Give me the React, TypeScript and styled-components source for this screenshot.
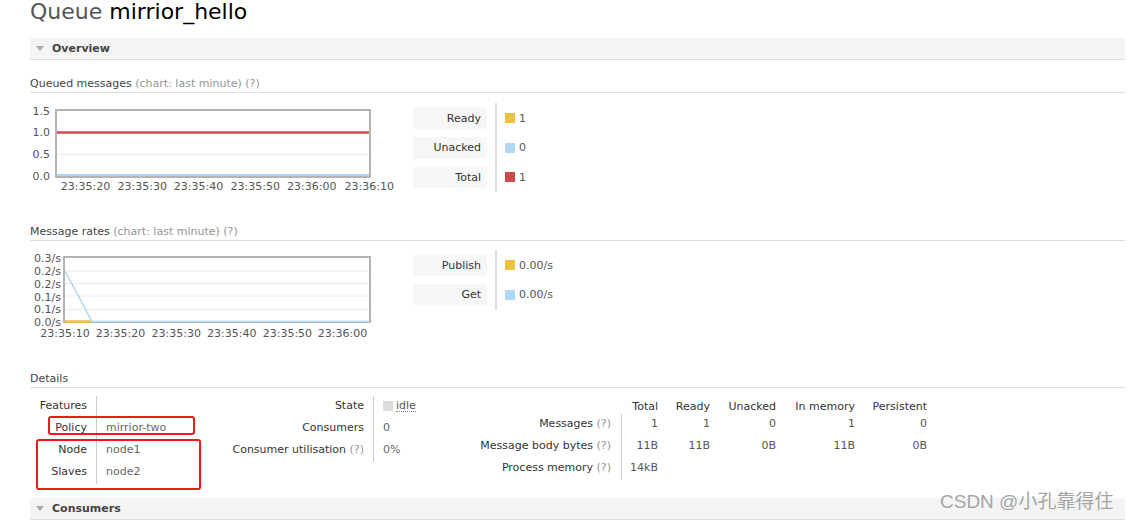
import React from 'react';
import styled, { createGlobalStyle } from 'styled-components';

const GlobalStyle = createGlobalStyle`
  html, body { margin: 0; padding: 0; background: #fff; }
  body {
    font-family: "DejaVu Sans", Verdana, sans-serif;
    font-size: 11px;
    color: #484848;
  }
`;

const Page = styled.div`
  position: relative;
  padding-left: 30px;
  width: 1095px;
  height: 522px;
  overflow: hidden;
`;

const Title = styled.h1`
  margin: 0 0 14px;
  font-size: 22px;
  line-height: 24px;
  font-weight: normal;
  color: #555;
  b { color: #000; font-weight: normal; }
`;

const SectionBar = styled.div<{ $mt?: number }>`
  height: 21px;
  margin-top: ${p => p.$mt ?? 0}px;
  border-bottom: 1px solid #ddd;
  background: #f4f4f4;
  display: flex;
  align-items: center;
  gap: 8px;
  padding-left: 6px;
  font-weight: bold;
  color: #444;
`;

const Caret = styled.span`
  width: 0;
  height: 0;
  border-left: 4.5px solid transparent;
  border-right: 4.5px solid transparent;
  border-top: 5px solid #aaa;
`;

const SubHeading = styled.h3<{ $mt: number }>`
  margin: ${p => p.$mt}px 0 0;
  font-size: 11px;
  line-height: 16px;
  font-weight: normal;
  color: #444;
  border-bottom: 1px solid #ddd;
`;

const Muted = styled.span`
  color: #949494;
`;

const ChartRow = styled.div<{ $mt: number }>`
  display: flex;
  align-items: flex-start;
  margin-top: ${p => p.$mt}px;
`;

const Plot = styled.svg`
  display: block;
  flex: none;
  font-family: "DejaVu Sans", Verdana, sans-serif;
  font-size: 11px;
  text { fill: #545454; }
`;

const Legend = styled.div`
  display: flex;
  margin: 3px 0 0 13px;
  gap: 8px;
`;

const LegendCol = styled.div`
  display: flex;
  flex-direction: column;
  gap: 7.5px;
  padding: 4px 0;
`;

const LegendLabel = styled.div`
  width: 74px;
  height: 22px;
  box-sizing: border-box;
  padding-right: 6px;
  background: #f7f7f7;
  border-radius: 3px;
  display: flex;
  align-items: center;
  justify-content: flex-end;
  color: #333;
`;

const LegendDivider = styled.div`
  width: 2px;
  background: #ddd;
`;

const LegendValue = styled.div`
  height: 22px;
  display: flex;
  align-items: center;
  gap: 4px;
  color: #555;
`;

const Swatch = styled.span<{ $color: string }>`
  width: 10px;
  height: 10px;
  background: ${p => p.$color};
`;

const DetailsRow = styled.div`
  display: flex;
  align-items: flex-start;
  margin-top: 8px;
`;

const KVTable = styled.div<{ $label: number; $value: number }>`
  display: grid;
  grid-template-columns: ${p => p.$label}px ${p => p.$value}px;
`;

const Th = styled.div<{ $pad?: number }>`
  height: 22px;
  box-sizing: border-box;
  padding: 3px ${p => p.$pad ?? 9}px 6px 0;
  line-height: 13px;
  text-align: right;
  color: #333;
  white-space: nowrap;
`;

const Td = styled.div`
  height: 22px;
  box-sizing: border-box;
  padding: 3px 0 6px 9px;
  line-height: 13px;
  border-left: 1px solid #ccc;
  color: #666;
  white-space: nowrap;
  display: flex;
  align-items: center;
  gap: 3px;
`;

const IdleBox = styled.span`
  width: 10px;
  height: 10px;
  background: #ddd;
`;

const Idle = styled.span`
  color: #555;
  border-bottom: 1px dotted #888;
  line-height: 11px;
`;

const StatsTable = styled.div`
  display: grid;
  grid-template-columns: 191px 41px 52px 66px 79px 72px;
`;

const StatsHead = styled.div`
  height: 18px;
  box-sizing: border-box;
  padding: 4px 4px 1px 0;
  line-height: 13px;
  text-align: right;
  color: #333;
  white-space: nowrap;
`;

const StatsCell = styled.div<{ $divider?: boolean }>`
  height: 22px;
  box-sizing: border-box;
  padding: 3px 4px 6px 0;
  line-height: 13px;
  text-align: right;
  color: #555;
  white-space: nowrap;
  border-left: ${p => (p.$divider ? '1px solid #ccc' : 'none')};
`;

const StatsLabel = styled.div`
  height: 22px;
  box-sizing: border-box;
  padding: 3px 10px 6px 0;
  line-height: 13px;
  text-align: right;
  color: #333;
  white-space: nowrap;
`;

const Annotation = styled.div<{ $l: number; $t: number; $w: number; $h: number }>`
  position: absolute;
  left: ${p => p.$l}px;
  top: ${p => p.$t}px;
  width: ${p => p.$w}px;
  height: ${p => p.$h}px;
  box-sizing: border-box;
  border: 2px solid #f01818;
  border-radius: 3px;
  pointer-events: none;
`;

const Watermark = styled.div`
  position: absolute;
  left: 940px;
  top: 491px;
  font-family: "Liberation Sans", "Noto Sans CJK SC", sans-serif;
  font-size: 19px;
  line-height: 22px;
  color: #a4a4a4;
  text-shadow: 0 0 1px #fff;
  white-space: nowrap;
`;

const YELLOW = '#edc240';
const BLUE = '#afd8f8';
const RED = '#cb4b4b';

function QueuedChart() {
  const times = [
    ['23:35:20', 85.5],
    ['23:35:30', 142.2],
    ['23:35:40', 198.5],
    ['23:35:50', 255.2],
    ['23:36:00', 311.8],
    ['23:36:10', 369.2],
  ] as const;
  const ys = [
    ['1.5', 111.5],
    ['1.0', 132.5],
    ['0.5', 154.5],
    ['0.0', 176.5],
  ] as const;
  return (
    <Plot width={370} height={95} viewBox="30 100 370 95">
      <rect x={56} y={110} width={314} height={67} fill="#fff" stroke="#b4b4b4" strokeWidth={2} />
      <line x1={57} x2={369} y1={154.5} y2={154.5} stroke="#ececec" strokeWidth={1} />
      <line x1={57} x2={369} y1={132.5} y2={132.5} stroke={YELLOW} strokeWidth={3} />
      <line x1={57} x2={369} y1={132.5} y2={132.5} stroke={RED} strokeWidth={2} />
      <line x1={57} x2={369} y1={175} y2={175} stroke={BLUE} strokeWidth={2} />
      {ys.map(([t, y]) => (
        <text key={t} x={50} y={y} textAnchor="end" dominantBaseline="central">{t}</text>
      ))}
      {times.map(([t, x]) => (
        <text key={t} x={x} y={186.5} textAnchor="middle" dominantBaseline="central">{t}</text>
      ))}
    </Plot>
  );
}

function RatesChart() {
  const times = [
    ['23:35:10', 65],
    ['23:35:20', 120.5],
    ['23:35:30', 176.2],
    ['23:35:40', 231.7],
    ['23:35:50', 287.4],
    ['23:36:00', 342.5],
  ] as const;
  const ys = [
    ['0.3/s', 258.8],
    ['0.2/s', 271.3],
    ['0.2/s', 284],
    ['0.1/s', 297],
    ['0.1/s', 309.6],
    ['0.0/s', 322.3],
  ] as const;
  return (
    <Plot width={370} height={95} viewBox="30 247 370 95">
      <rect x={64} y={257} width={306} height={65} fill="#fff" stroke="#b4b4b4" strokeWidth={2} />
      {[271, 283.5, 296, 309.5].map(y => (
        <line key={y} x1={65} x2={369} y1={y} y2={y} stroke="#ececec" strokeWidth={1} />
      ))}
      <line x1={65} x2={92} y1={321.5} y2={321.5} stroke={YELLOW} strokeWidth={2.5} />
      <polyline points="65,271 92,321.5 369,321.5" fill="none" stroke={BLUE} strokeWidth={1.5} />
      {ys.map(([t, y], i) => (
        <text key={i} x={61} y={y} textAnchor="end" dominantBaseline="central">{t}</text>
      ))}
      {times.map(([t, x]) => (
        <text key={t} x={x} y={333.8} textAnchor="middle" dominantBaseline="central">{t}</text>
      ))}
    </Plot>
  );
}

type LegendItem = { label: string; color: string; value: string };

function ChartLegend({ items }: { items: LegendItem[] }) {
  return (
    <Legend>
      <LegendCol>
        {items.map(it => (
          <LegendLabel key={it.label}>{it.label}</LegendLabel>
        ))}
      </LegendCol>
      <LegendDivider />
      <LegendCol>
        {items.map(it => (
          <LegendValue key={it.label}>
            <Swatch $color={it.color} />
            {it.value}
          </LegendValue>
        ))}
      </LegendCol>
    </Legend>
  );
}

const statRows = [
  { label: 'Messages', values: ['1', '1', '0', '1', '0'] },
  { label: 'Message body bytes', values: ['11B', '11B', '0B', '11B', '0B'] },
  { label: 'Process memory', values: ['14kB', '', '', '', ''] },
];

export default function App() {
  return (
    <>
      <GlobalStyle />
      <Page>
        <Title>
          Queue <b>mirrior_hello</b>
        </Title>

        <SectionBar>
          <Caret />
          Overview
        </SectionBar>

        <SubHeading $mt={16}>
          Queued messages <Muted>(chart: last minute) (?)</Muted>
        </SubHeading>
        <ChartRow $mt={7}>
          <QueuedChart />
          <ChartLegend
            items={[
              { label: 'Ready', color: YELLOW, value: '1' },
              { label: 'Unacked', color: BLUE, value: '0' },
              { label: 'Total', color: RED, value: '1' },
            ]}
          />
        </ChartRow>

        <SubHeading $mt={29}>
          Message rates <Muted>(chart: last minute) (?)</Muted>
        </SubHeading>
        <ChartRow $mt={6}>
          <RatesChart />
          <ChartLegend
            items={[
              { label: 'Publish', color: YELLOW, value: '0.00/s' },
              { label: 'Get', color: BLUE, value: '0.00/s' },
            ]}
          />
        </ChartRow>

        <SubHeading $mt={29}>Details</SubHeading>
        <DetailsRow>
          <KVTable $label={66} $value={104}>
            <Th>Features</Th>
            <Td />
            <Th>Policy</Th>
            <Td>mirrior-two</Td>
            <Th>Node</Th>
            <Td>node1</Td>
            <Th>Slaves</Th>
            <Td>node2</Td>
          </KVTable>

          <KVTable $label={173} $value={57}>
            <Th>State</Th>
            <Td>
              <IdleBox />
              <Idle>idle</Idle>
            </Td>
            <Th>Consumers</Th>
            <Td>0</Td>
            <Th>
              Consumer utilisation <Muted>(?)</Muted>
            </Th>
            <Td>0%</Td>
          </KVTable>

          <StatsTable>
            <StatsHead />
            <StatsHead>Total</StatsHead>
            <StatsHead>Ready</StatsHead>
            <StatsHead>Unacked</StatsHead>
            <StatsHead>In memory</StatsHead>
            <StatsHead>Persistent</StatsHead>
            {statRows.map(r => (
              <React.Fragment key={r.label}>
                <StatsLabel>
                  {r.label} <Muted>(?)</Muted>
                </StatsLabel>
                {r.values.map((v, i) => (
                  <StatsCell key={i} $divider={i === 0}>{v}</StatsCell>
                ))}
              </React.Fragment>
            ))}
          </StatsTable>
        </DetailsRow>

        <SectionBar $mt={14}>
          <Caret />
          Consumers
        </SectionBar>

        <Annotation $l={48} $t={416} $w={147} $h={19} />
        <Annotation $l={36} $t={439} $w={165} $h={51} />
        <Watermark>CSDN @小孔靠得住</Watermark>
      </Page>
    </>
  );
}
